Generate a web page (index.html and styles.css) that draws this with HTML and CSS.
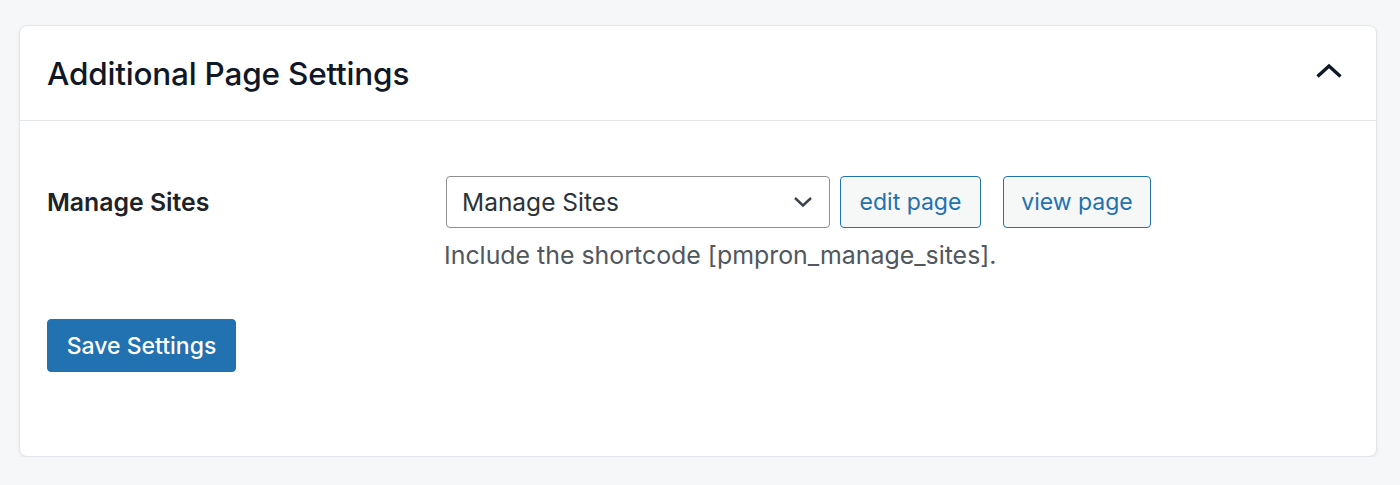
FILE: index.html
```html
<!DOCTYPE html>
<html lang="en">
<head>
    <meta charset="UTF-8">
    <meta name="viewport" content="width=device-width, initial-scale=1.0">
    <title>Additional Page Settings</title>
    <link rel="stylesheet" href="styles.css">
</head>
<body>

<div class="postbox">
    <div class="postbox-header">
        <h2>Additional Page Settings</h2>
        <button class="toggle" aria-label="Collapse">
            <svg width="28" height="16" viewBox="0 0 28 16">
                <path d="M2.5 13.5 L14 3 L25.5 13.5" fill="none" stroke="#101828" stroke-width="3.4" stroke-linejoin="miter"/>
            </svg>
        </button>
    </div>

    <div class="inside">
        <div class="setting-row">
            <div class="setting-label">Manage Sites</div>
            <div class="setting-field">
                <div class="field-controls">
                    <div class="select">
                        <span>Manage Sites</span>
                        <svg width="20" height="12" viewBox="0 0 20 12">
                            <path d="M2 2 L10 9.5 L18 2" fill="none" stroke="#3c434a" stroke-width="2.4"/>
                        </svg>
                    </div>
                    <a class="button edit">edit page</a>
                    <a class="button view">view page</a>
                </div>
                <p class="description">Include the shortcode [pmpron_manage_sites].</p>
            </div>
        </div>

        <button class="button-primary">Save Settings</button>
    </div>
</div>

</body>
</html>
```

FILE: styles.css
```css
body {
    font-family: Inter, "Noto Sans", sans-serif;
    margin: 0;
    padding: 25px 23px 0 19px;
    background-color: #f6f7f9;
    color: #1d2327;
}
.postbox {
    background-color: #fff;
    border: 1px solid #e2e4e9;
    border-radius: 8px;
    height: 430px;
    box-shadow: 0 2px 4px rgba(0, 0, 0, 0.06);
}
.postbox-header {
    height: 94px;
    border-bottom: 1px solid #e2e4e9;
    display: flex;
    align-items: center;
    justify-content: space-between;
    padding: 0 33px 0 27px;
}
.postbox-header h2 {
    margin: 0;
    font-size: 31.5px;
    font-weight: 500;
    color: #101828;
    letter-spacing: -0.2px;
}
.toggle {
    background: none;
    border: none;
    padding: 0;
    display: flex;
    margin-top: -4px;
}
.inside {
    padding: 55px 27px 0 27px;
}
.setting-row {
    display: flex;
}
.setting-label {
    width: 399px;
    font-size: 24.8px;
    font-weight: 600;
    color: #1d2327;
    line-height: 52px;
}
.field-controls {
    display: flex;
    align-items: center;
}
.select {
    box-sizing: border-box;
    width: 384px;
    height: 52px;
    border: 1px solid #8c8f94;
    border-radius: 4px;
    display: flex;
    align-items: center;
    justify-content: space-between;
    padding: 0 16px 0 15px;
    font-size: 24.5px;
    color: #2c3338;
}
.button {
    box-sizing: border-box;
    height: 52px;
    display: flex;
    align-items: center;
    justify-content: center;
    border: 1.5px solid #2271b1;
    border-radius: 4px;
    background-color: #f6f7f7;
    color: #2271b1;
    font-size: 23px;
}
.edit {
    width: 141px;
    margin-left: 10px;
}
.view {
    width: 148px;
    margin-left: 22px;
}
.description {
    margin: 13px 0 0 -2px;
    font-size: 24.9px;
    line-height: 29px;
    color: #50575e;
}
.button-primary {
    margin-top: 49px;
    width: 189px;
    height: 53px;
    background-color: #2271b1;
    border: 1px solid #2271b1;
    border-radius: 4px;
    color: #fff;
    font-family: inherit;
    font-size: 23px;
    font-weight: 500;
    padding: 0;
}
```
